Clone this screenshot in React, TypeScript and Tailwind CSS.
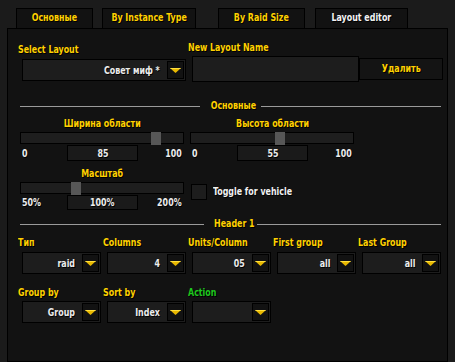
import { ReactNode } from "react";

const gold = "text-[#ffd100]";
const shadow = "[text-shadow:1px_1px_0_#000]";

// narrow face: condensed glyphs squeezed a bit further
function T({ children, o = "origin-left" }: { children: ReactNode; o?: string }) {
  return <span className={`inline-block whitespace-nowrap scale-x-[0.8] ${o}`}>{children}</span>;
}

function Arrow() {
  return (
    <div className="flex h-[18px] w-[17px] shrink-0 items-center justify-center border border-black bg-[#121212]">
      <svg width="11" height="5" viewBox="0 0 11 5">
        <polygon points="0,0 11,0 5.5,5" fill="#e8b800" />
        <polygon points="0,0 11,0 10,1 1,1" fill="#ffe040" />
      </svg>
    </div>
  );
}

function Dropdown({ value, w }: { value: string; w: string }) {
  return (
    <div className={`flex ${w} h-[22px] items-center justify-end border border-black bg-[#1d1d1d] pr-px`}>
      <span className={`pr-[7px] text-[11px] leading-none text-[#ececec] ${shadow}`}>
        <T o="origin-right">{value}</T>
      </span>
      <Arrow />
    </div>
  );
}

function Label({ children, color = gold }: { children: ReactNode; color?: string }) {
  return (
    <div className={`h-[12px] text-[11px] leading-[12px] ${color} ${shadow}`}>
      <T>{children}</T>
    </div>
  );
}

function Header({ title, w }: { title: string; w: string }) {
  return (
    <div className="ml-[2px] flex h-[12px] w-[421px] items-center gap-[5px]">
      <div className="h-px flex-1 bg-[#9a9a9a]" />
      <span className={`${w} text-center text-[11px] leading-[12px] ${gold} ${shadow}`}>
        <T o="origin-center">{title}</T>
      </span>
      <div className="h-px flex-1 bg-[#9a9a9a]" />
    </div>
  );
}

function Slider({ label, pos, min, max, value, boxH }: { label: string; pos: number; min: string; max: string; value: string; boxH: string }) {
  return (
    <div className="flex w-[165px] shrink-0 flex-col">
      <div className={`h-[12px] text-center text-[11px] leading-[12px] ${gold} ${shadow}`}>
        <T o="origin-center">{label}</T>
      </div>
      <div className="relative mt-[2px] h-[12px] w-[164px] border border-black bg-[#1e1e1e]">
        <div className="absolute top-[-1px] h-[13px] w-[10px] bg-[#575757]" style={{ left: pos }} />
      </div>
      <div className="mt-px flex items-center text-[11px] leading-none text-[#ececec]">
        <span className={`w-[47px] pl-[2px] ${shadow}`}>
          <T>{min}</T>
        </span>
        <div className={`flex ${boxH} w-[71px] items-center justify-center border border-black bg-[#1a1a1a] ${shadow}`}>
          <T o="origin-center">{value}</T>
        </div>
        <span className={`w-[44px] text-right ${shadow}`}>
          <T o="origin-right">{max}</T>
        </span>
      </div>
    </div>
  );
}

const tabs = [
  { name: "Основные", w: "w-[77px]", ml: "" },
  { name: "By Instance Type", w: "w-[94px]", ml: "ml-[9px]" },
  { name: "By Raid Size", w: "w-[87px]", ml: "ml-[22px]" },
  { name: "Layout editor", w: "w-[93px]", ml: "ml-[10px]", active: true },
];

export default function App() {
  return (
    <div
      className="h-[362px] w-[455px] overflow-hidden bg-[#1b1b1b] font-bold"
      style={{ fontFamily: '"DejaVu Sans Condensed", "DejaVu Sans", sans-serif' }}
    >
      <div className="flex pl-[16px] pt-[8px]">
        {tabs.map((t) => (
          <div
            key={t.name}
            className={`flex h-[20px] ${t.w} ${t.ml} items-center justify-center border border-b-0 border-black bg-[#121212] text-[11px] ${
              t.active ? "text-[#f2f2f2]" : gold
            } ${shadow}`}
          >
            <T o="origin-center">{t.name}</T>
          </div>
        ))}
      </div>

      <div className="ml-[7px] flex h-[334px] w-[441px] flex-col border border-black bg-[#121212] pl-[10px] pr-[4px]">
        <div className="flex gap-[3px]">
          <div className="flex w-[167px] shrink-0 flex-col pt-[15px]">
            <Label>Select Layout</Label>
            <div className="ml-[4px] mt-[3px]">
              <Dropdown value="Совет миф *" w="w-[164px]" />
            </div>
          </div>
          <div className="flex flex-col pt-[13px]">
            <Label>New Layout Name</Label>
            <div className="ml-[4px] mt-[2px] flex items-center">
              <div className="h-[26px] w-[167px] border border-black bg-[#1d1d1d]" />
              <button className={`h-[22px] w-[84px] border border-black bg-[#141414] text-[11px] ${gold} ${shadow}`}>
                <T o="origin-center">Удалить</T>
              </button>
            </div>
          </div>
        </div>

        <div className="mt-[18px]">
          <Header title="Основные" w="w-[51px]" />
        </div>

        <div className="mt-[6px] flex gap-[5px] pl-[2px]">
          <Slider label="Ширина области" pos={130} min="0" max="100" value="85" boxH="h-[16px]" />
          <Slider label="Высота области" pos={84} min="0" max="100" value="55" boxH="h-[16px]" />
        </div>

        <div className="mt-[7px] flex items-start gap-[6px] pl-[2px]">
          <Slider label="Масштаб" pos={50} min="50%" max="200%" value="100%" boxH="h-[15px]" />
          <div className="mt-[16px] flex items-center gap-[6px]">
            <div className="h-[16px] w-[16px] border border-black bg-[#1d1d1d]" />
            <span className={`text-[11px] text-[#f2f2f2] ${shadow}`}>
              <T>Toggle for vehicle</T>
            </span>
          </div>
        </div>

        <div className="mt-[8px]">
          <Header title="Header 1" w="w-[43px]" />
        </div>

        <div className="mt-[7px] flex">
          {[
            ["Тип", "raid"],
            ["Columns", "4"],
            ["Units/Column", "05"],
            ["First group", "all"],
            ["Last Group", "all"],
          ].map(([l, v]) => (
            <div key={l} className="flex w-[85px] shrink-0 flex-col">
              <Label>{l}</Label>
              <div className="ml-[4px] mt-[3px]">
                <Dropdown value={v} w="w-[79px]" />
              </div>
            </div>
          ))}
        </div>

        <div className="mt-[13px] flex">
          {[
            ["Group by", "Group", gold],
            ["Sort by", "Index", gold],
            ["Action", "", "text-[#1ec81e]"],
          ].map(([l, v, c]) => (
            <div key={l} className="flex w-[85px] shrink-0 flex-col">
              <Label color={c}>{l}</Label>
              <div className="ml-[4px] mt-[2px]">
                <Dropdown value={v} w="w-[79px]" />
              </div>
            </div>
          ))}
        </div>
      </div>
    </div>
  );
}
